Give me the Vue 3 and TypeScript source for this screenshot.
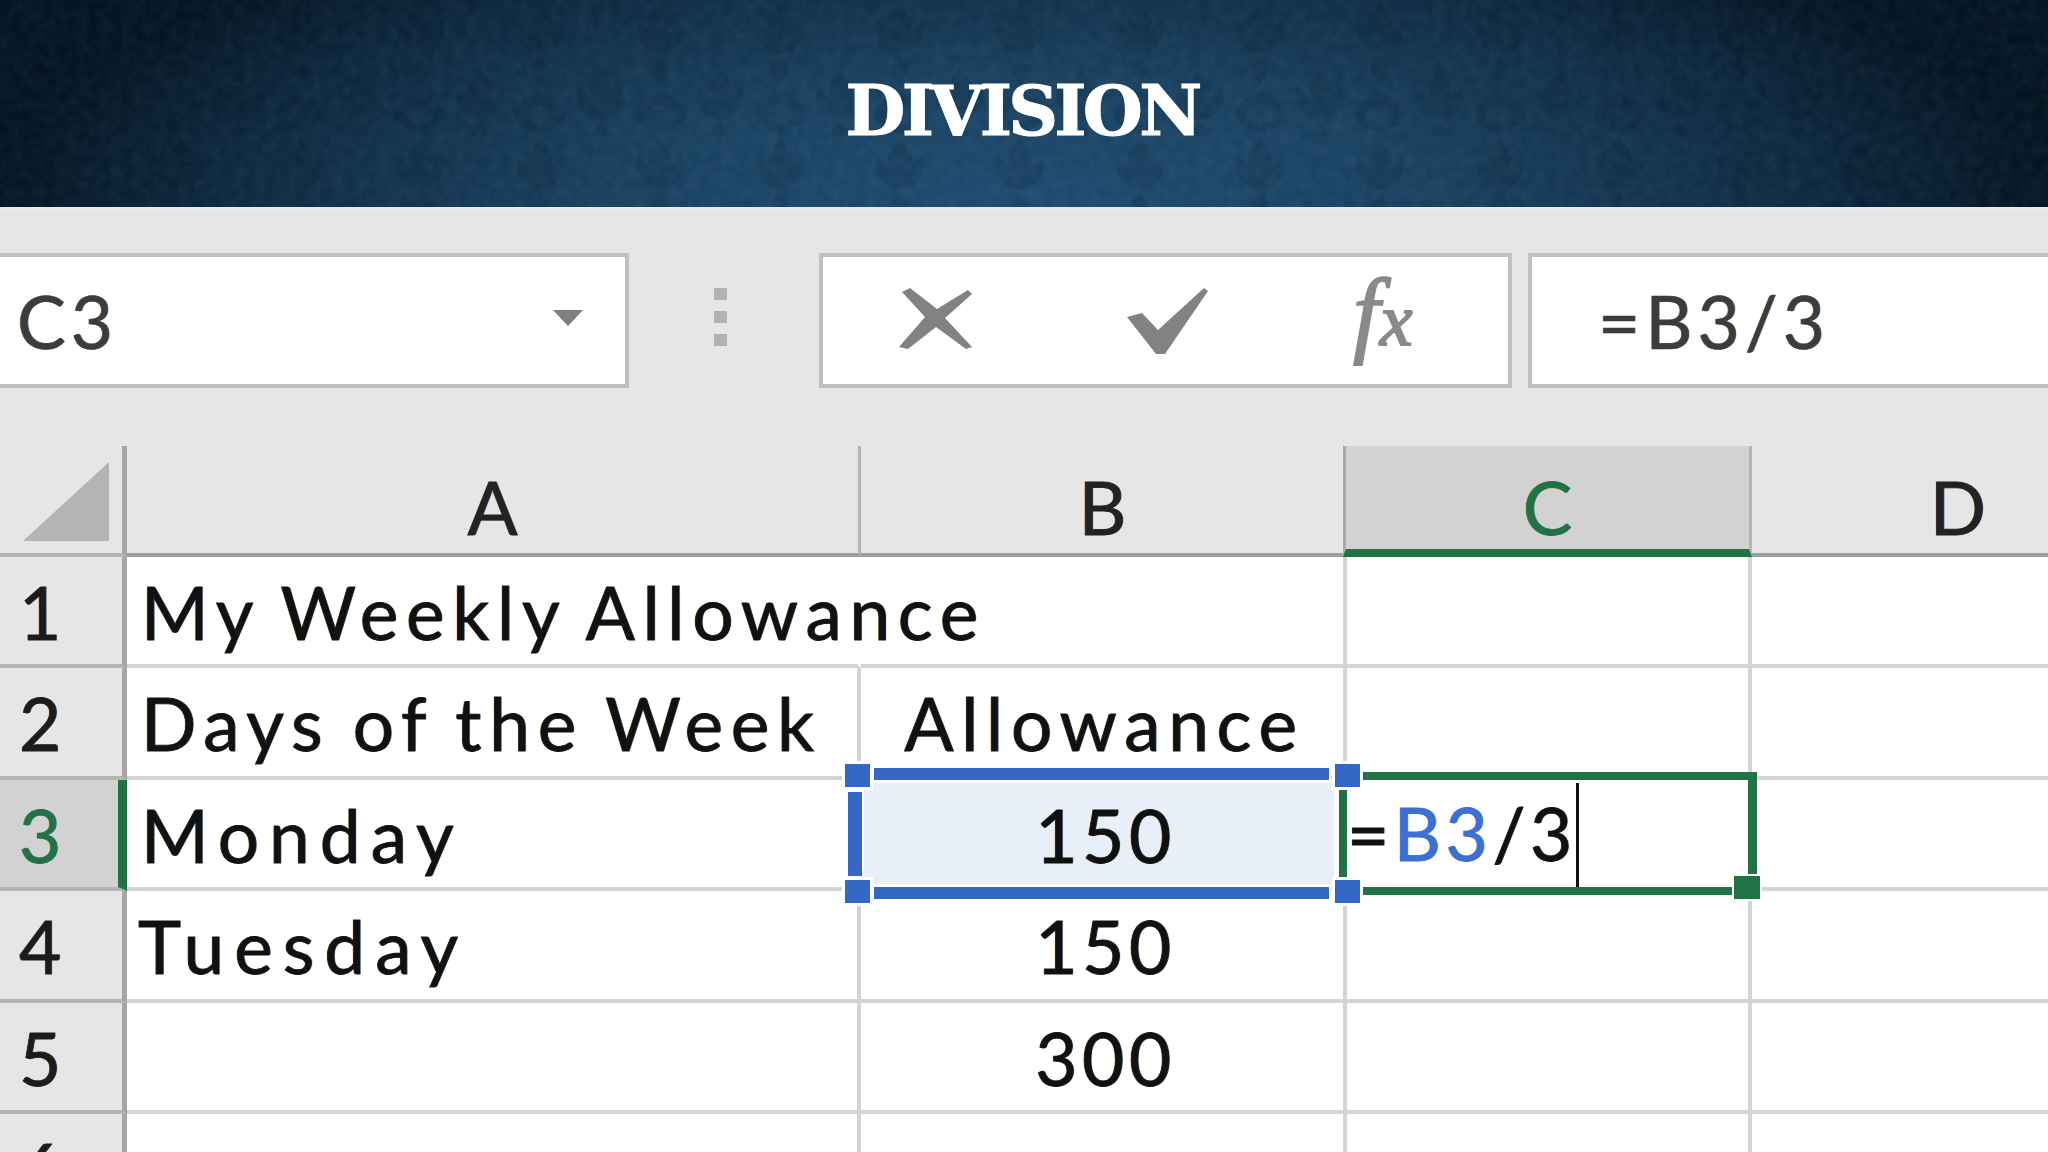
<template>
  <div class="page">
    <header class="banner">
      <svg class="damask" aria-hidden="true">
        <defs>
          <pattern id="dmk" width="120" height="136" patternUnits="userSpaceOnUse">
            <g fill="#03101c">
              <path d="M60 2c5 9 12 13 12 21 0 5-4 8-8 10 6-1 14-6 17-13 5 9 3 20-5 27-4 4-10 6-16 6s-12-2-16-6c-8-7-10-18-5-27 3 7 11 12 17 13-4-2-8-5-8-10 0-8 7-12 12-21z" />
              <path d="M60 56c3 5 9 8 9 14s-6 8-9 14c-3-6-9-8-9-14s6-9 9-14z" />
              <path d="M0 68c5 9 12 13 12 21 0 5-4 8-8 10 6-1 14-6 17-13 5 9 3 20-5 27-4 4-10 6-16 6zM120 68c-5 9-12 13-12 21 0 5 4 8 8 10-6-1-14-6-17-13-5 9-3 20 5 27 4 4 10 6 16 6z" />
              <path d="M0 122c3 5 9 7 9 14H-9c0-7 6-9 9-14zM120 122c3 5 9 7 9 14h-18c0-7 6-9 9-14z" />
              <path d="M60 92c10 4 26 14 26 22s-14 16-26 20c-12-4-26-12-26-20s16-18 26-22zm0 12c-6 3-14 7-14 11s8 8 14 10c6-2 14-6 14-10s-8-8-14-11z" />
            </g>
          </pattern>
          <filter id="mottle" x="0" y="0" width="100%" height="100%">
            <feTurbulence type="fractalNoise" baseFrequency="0.09" numOctaves="3" seed="4" />
            <feColorMatrix values="0 0 0 0 0.55  0 0 0 0 0.72  0 0 0 0 0.88  0 0 0 0.5 -0.12" />
          </filter>
        </defs>
        <rect width="100%" height="100%" fill="url(#dmk)" opacity="0.12" />
        <rect width="100%" height="100%" filter="url(#mottle)" opacity="0.18" />
      </svg>
      <h1 class="title">DIVISION</h1>
    </header>

    <main class="sheet">
      <div class="formula-bar">
        <div class="box name-box">
          <span class="bar-text">C3</span>
          <i class="arrow"></i>
        </div>
        <div class="grip"><i></i><i></i><i></i></div>
        <div class="box fx-box">
          <svg class="ico-x" viewBox="0 0 74 61">
            <path d="M3 4 11 0 38 21 69 2 73 6 46 30 73 59 67 61 37 39 9 61 0 59 26 29Z" fill="#828282" />
          </svg>
          <svg class="ico-check" viewBox="0 0 81 66">
            <path d="M0 29 15 25 31 42 77 0 81 3 38 66 29 66Z" fill="#828282" />
          </svg>
          <span class="ico-fx">f<span class="ico-fx-x">x</span></span>
        </div>
        <div class="box input-box">
          <span class="bar-text">=B3/3</span>
        </div>
      </div>

      <div class="grid">
        <div class="corner"><i class="tri"></i></div>
        <div
          v-for="c in columns"
          :key="c"
          class="col-head"
          :class="{ active: c === 'C', last: c === 'D' }"
        >
          {{ c }}
        </div>

        <template v-for="r in rows" :key="r.n">
          <div class="row-head" :class="{ active: r.n === 3 }">
            <span>{{ r.n }}</span>
          </div>
          <div class="cell left" :class="[r.overflow ? 'spill' : '', r.short ? 'short' : '', r.n === 4 ? 'tue' : '']">{{ r.a }}</div>
          <div class="cell mid" :class="{ num: r.n > 2 }">{{ r.b }}</div>
          <div class="cell"></div>
          <div class="cell last"></div>
        </template>

        <!-- cell being edited -->
        <div class="edit-cell">
          <span class="edit-text">=<b>B3</b>/3</span>
          <i class="caret"></i>
          <i class="fill-handle"></i>
        </div>

        <!-- range highlight for the referenced cell B3 -->
        <div class="ref-range">
          <i class="ref-fill"></i>
          <i class="rb rb-top"></i>
          <i class="rb rb-bottom"></i>
          <i class="rb rb-left"></i>
          <i class="hd hd-tl"></i>
          <i class="hd hd-tr"></i>
          <i class="hd hd-bl"></i>
          <i class="hd hd-br"></i>
        </div>
      </div>
    </main>
  </div>
</template>

<script setup lang="ts">
interface Row {
  n: number;
  a: string;
  b: string;
  overflow?: boolean;
  short?: boolean;
}

const columns = ["A", "B", "C", "D"];

const rows: Row[] = [
  { n: 1, a: "My Weekly Allowance", b: "", overflow: true },
  { n: 2, a: "Days of the Week", b: "Allowance" },
  { n: 3, a: "Monday", b: "150", short: true },
  { n: 4, a: "Tuesday", b: "150", short: true },
  { n: 5, a: "", b: "300" },
  { n: 6, a: "", b: "" },
];
</script>

<style>
html,
body {
  margin: 0;
  background: #fff;
}
</style>

<style scoped>
.page {
  width: 2048px;
  height: 1152px;
  overflow: hidden;
  display: flex;
  flex-direction: column;
  font-family: Lato, "Liberation Sans", sans-serif;
}

.banner {
  position: relative;
  height: 207px;
  flex: none;
  display: flex;
  align-items: center;
  justify-content: center;
  background: radial-gradient(ellipse 1030px 330px at 50% 100%, #1f4a70 0%, #19405f 40%, #0e2a42 75%, #041422 100%),
    #041422;
  overflow: hidden;
}

.damask {
  position: absolute;
  inset: 0;
  width: 100%;
  height: 100%;
}

.title {
  position: relative;
  margin: 0;
  font-family: "DejaVu Serif", serif;
  font-weight: 700;
  font-size: 69px;
  letter-spacing: -3.8px;
  line-height: 1;
  color: #fff;
  -webkit-text-stroke: 1px #fff;
  transform: translate(-2px, 7px);
}

.sheet {
  flex: 1;
  min-height: 0;
  display: flex;
  flex-direction: column;
  background: #e6e6e6;
  border-top: 3px solid #e3ebf1;
}

.formula-bar {
  flex: none;
  height: 236px;
  box-sizing: border-box;
  padding-top: 43px;
  display: flex;
  align-items: flex-start;
}

.box {
  height: 135px;
  box-sizing: border-box;
  background: #fff;
  border: 4px solid #c0c0c0;
  display: flex;
  align-items: center;
}

.name-box {
  width: 633px;
  margin-left: -4px;
  padding: 0 42px 0 17px;
  justify-content: space-between;
}

.bar-text {
  font-size: 73px;
  line-height: 1;
  letter-spacing: 5px;
  color: #3c3c3c;
  -webkit-text-stroke: 0.6px #3c3c3c;
  transform: translateY(1px);
  text-shadow: -1px 0 rgba(225, 140, 50, 0.35), 1px 0 rgba(50, 120, 225, 0.35);
}

.arrow {
  width: 0;
  height: 0;
  border-left: 15px solid transparent;
  border-right: 15px solid transparent;
  border-top: 16px solid #7f7f7f;
  transform: translateY(-3px);
}

.grip {
  width: 13px;
  margin: 35px 92px 0 85px;
  display: flex;
  flex-direction: column;
  gap: 11px;
}

.grip i {
  height: 12px;
  background: #b2b2b2;
}

.fx-box {
  position: relative;
  width: 693px;
  margin-right: 16px;
}

.fx-box svg,
.ico-fx {
  position: absolute;
}

.ico-x {
  left: 76px;
  top: 31px;
  width: 74px;
  height: 61px;
}

.ico-check {
  left: 304px;
  top: 31px;
  width: 81px;
  height: 66px;
}

.ico-fx {
  left: 530px;
  top: 3px;
  font-family: "Liberation Serif", serif;
  font-style: italic;
  font-size: 96px;
  line-height: 1.1;
  color: #8a8a8a;
  -webkit-text-stroke: 1.8px #8a8a8a;
}

.ico-fx-x {
  font-size: 74px;
}

.input-box {
  flex: 1;
  margin-right: -4px;
  padding-left: 66px;
}

.grid {
  position: relative;
  flex: 1;
  min-height: 0;
  display: grid;
  grid-template-columns: 127px 734px 486px 405px 412px;
  grid-template-rows: 111px repeat(6, 111.4px);
  font-size: 73px;
  color: #111;
  -webkit-text-stroke: 0.8px currentColor;
  text-shadow: -1px 0 rgba(225, 140, 50, 0.4), 1px 0 rgba(50, 120, 225, 0.4);
}

.corner {
  position: relative;
  border-right: 5px solid #a6a6a6;
  border-bottom: 4px solid #b4b4b4;
  box-sizing: border-box;
}

.tri {
  position: absolute;
  left: 23px;
  top: 16px;
  width: 86px;
  height: 79px;
  background: #b4b4b4;
  clip-path: polygon(100% 0, 100% 100%, 0 100%);
}

.col-head {
  box-sizing: border-box;
  display: flex;
  justify-content: center;
  align-items: flex-end;
  line-height: 1;
  padding-bottom: 9px;
  border-right: 3px solid #b4b4b4;
  border-bottom: 4px solid #9e9e9e;
  font-size: 74px;
  color: #222;
}

.col-head.active {
  margin-left: -4px;
  background: #d2d2d2;
  color: #217346;
  border-left: 3px solid #a9a9a9;
  border-bottom: 8px solid #217346;
  padding-bottom: 5px;
}

.col-head.last {
  border-right: 0;
}

.row-head {
  box-sizing: border-box;
  border-right: 5px solid #a6a6a6;
  border-bottom: 4px solid #b4b4b4;
  padding: 12px 0 0 19px;
  line-height: 86px;
  color: #1c1c1c;
  overflow: hidden;
}

.row-head.active {
  background: #d2d2d2;
  color: #217346;
  border-right: 9px solid #217346;
}

.cell {
  background: #fff;
  box-sizing: border-box;
  border-right: 4px solid #d4d4d4;
  border-bottom: 4px solid #d4d4d4;
  white-space: nowrap;
  line-height: 86px;
  padding-top: 12px;
  letter-spacing: 7.7px;
  word-spacing: -4px;
}

.cell.last {
  border-right: 0;
}

.cell.left {
  padding-left: 14px;
}

.cell.short {
  letter-spacing: 10px;
}

.cell.tue {
  padding-left: 11px;
}

.cell.spill {
  position: relative;
  z-index: 1;
  border-right-color: transparent;
}

.cell.mid {
  padding-left: 5px;
  text-align: center;
}

.cell.num {
  padding-left: 7px;
  letter-spacing: 4.5px;
}

/* range marker on B3 */
.ref-range {
  position: absolute;
  left: 848px;
  top: 318px;
  width: 512px;
  height: 139px;
  pointer-events: none;
  text-shadow: none;
}

.ref-fill {
  position: absolute;
  inset: 19px 26px 19px 14px;
  background: #e9eff9;
  mix-blend-mode: multiply;
}

.rb,
.hd {
  position: absolute;
  background: #3568c6;
  box-shadow: 0 0 0 2px #fff;
}

.rb-top {
  left: 26px;
  right: 31px;
  top: 4px;
  height: 12px;
}

.rb-bottom {
  left: 26px;
  right: 31px;
  top: 123px;
  height: 12px;
}

.rb-left {
  left: 0;
  top: 28px;
  width: 14px;
  height: 84px;
}

.hd {
  width: 25px;
  height: 23px;
  box-shadow: 0 0 0 3px #fff;
}

.hd-tl {
  left: -3px;
  top: 0;
}

.hd-tr {
  right: 0;
  top: 0;
}

.hd-bl {
  left: -3px;
  bottom: 0;
}

.hd-br {
  right: 0;
  bottom: 0;
}

/* active cell with its typed formula */
.edit-cell {
  position: absolute;
  left: 1339px;
  top: 326px;
  width: 418px;
  height: 123px;
  box-sizing: border-box;
  background: #fff;
  border-style: solid;
  border-color: #217346;
  border-width: 8px 9px 8px 8px;
  line-height: 86px;
  font-size: 73px;
}

.edit-text {
  display: block;
  margin-top: 10px;
  padding-left: 0;
  letter-spacing: 4.5px;
  white-space: nowrap;
}

.edit-text b {
  font-weight: 400;
  color: #3c70d4;
}

.caret {
  position: absolute;
  left: 229px;
  top: 3px;
  bottom: 0;
  width: 3px;
  background: #111;
}

.fill-handle {
  position: absolute;
  right: -12px;
  bottom: -12px;
  width: 26px;
  height: 23px;
  background: #217346;
  box-shadow: 0 0 0 2px #fff;
}
</style>
